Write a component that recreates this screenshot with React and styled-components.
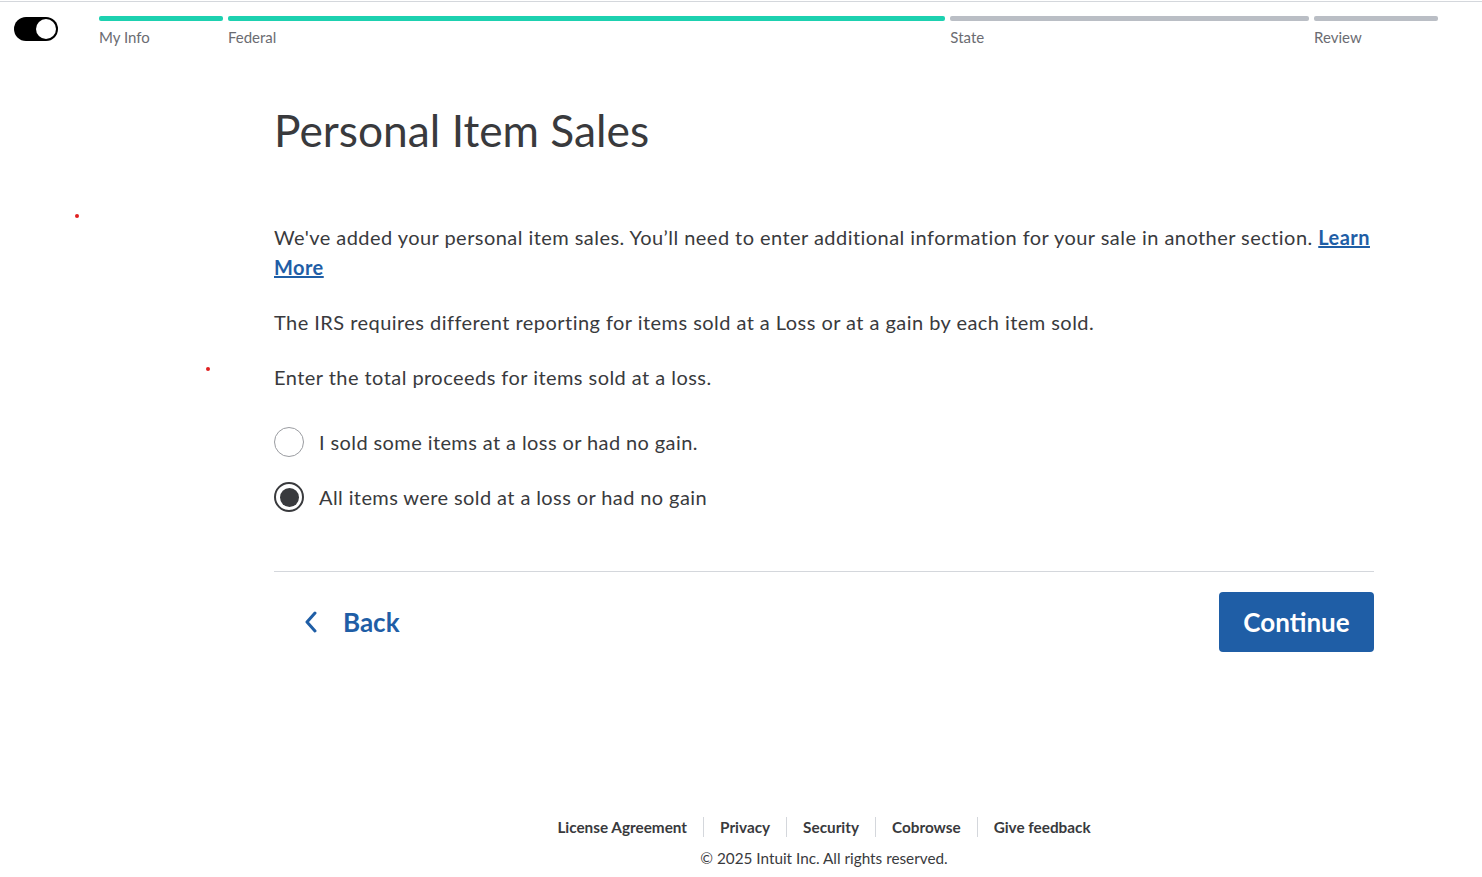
import React from 'react'
import styled, { createGlobalStyle } from 'styled-components'

const GlobalStyle = createGlobalStyle`
  html, body {
    margin: 0;
    padding: 0;
    background: #fff;
  }
  body {
    font-family: Lato, "Open Sans", sans-serif;
    color: #393a3d;
  }
`

const Page = styled.div`
  position: relative;
  min-height: 877px;
  display: flex;
  flex-direction: column;
  border-top: 1px solid #d4d7dc;
  margin-top: 1px;
  box-sizing: border-box;
`

const Header = styled.header`
  display: flex;
  align-items: flex-start;
  padding: 14px 44px 0 14px;
`

const Toggle = styled.div`
  width: 44px;
  height: 24px;
  border-radius: 12px;
  background: #000;
  flex: none;
  margin-top: 1px;
  display: flex;
  justify-content: flex-end;
  align-items: center;
  padding: 0 2px;
  box-sizing: border-box;
`

const Knob = styled.span`
  width: 20px;
  height: 20px;
  border-radius: 50%;
  background: #fff;
`

const Steps = styled.ol`
  display: flex;
  gap: 5px;
  list-style: none;
  margin: 0 0 0 41px;
  padding: 0;
  flex: 1;
`

const Step = styled.li`
  flex: ${props => props.$grow} 1 0;
  display: flex;
  flex-direction: column;
`

const Bar = styled.span`
  height: 5px;
  border-radius: 2px;
  background: ${props => (props.$done ? '#1dd1b0' : '#babec5')};
`

const StepLabel = styled.span`
  margin-top: 7px;
  font-size: 15px;
  color: #6b6c72;
`

const Main = styled.main`
  width: 1100px;
  margin-left: 274px;
  flex: 1;
  display: flex;
  flex-direction: column;
`

const Title = styled.h1`
  margin: 56px 0 0;
  font-size: 44.3px;
  font-weight: 400;
  line-height: 56px;
  color: #393a3d;
`

const Para = styled.p`
  margin: ${props => props.$top || 25}px 0 0;
  font-size: 20px;
  letter-spacing: 0.45px;
  line-height: 30px;
  color: #393a3d;
`

const Link = styled.a`
  color: #1f5ea6;
  font-weight: 700;
  text-decoration: underline;
`

const Options = styled.div`
  display: flex;
  flex-direction: column;
  gap: 25px;
  margin-top: 35px;
`

const Option = styled.label`
  display: flex;
  align-items: center;
  gap: 15px;
  font-size: 20px;
  letter-spacing: 0.4px;
  color: #393a3d;
  cursor: pointer;
`

const Radio = styled.span`
  width: 30px;
  height: 30px;
  border-radius: 50%;
  box-sizing: border-box;
  border: ${props => (props.$checked ? '2px solid #393a3d' : '1px solid #9a9ca1')};
  display: flex;
  align-items: center;
  justify-content: center;
  flex: none;
  &::after {
    content: '';
    width: 19px;
    height: 19px;
    border-radius: 50%;
    background: ${props => (props.$checked ? '#393a3d' : 'transparent')};
  }
`

const Divider = styled.hr`
  border: 0;
  border-top: 1px solid #d4d7dc;
  margin: 59px 0 0;
`

const Actions = styled.div`
  display: flex;
  justify-content: space-between;
  align-items: center;
  margin-top: 20px;
`

const BackButton = styled.button`
  display: flex;
  align-items: center;
  gap: 25px;
  background: none;
  border: 0;
  padding: 0 0 0 30px;
  font-family: inherit;
  font-size: 26px;
  font-weight: 700;
  color: #1f5ea6;
  cursor: pointer;
`

const ContinueButton = styled.button`
  width: 155px;
  height: 60px;
  border: 0;
  border-radius: 4px;
  background: #1f5ea6;
  color: #fff;
  font-family: inherit;
  font-size: 26px;
  font-weight: 700;
  cursor: pointer;
`

const Footer = styled.footer`
  display: flex;
  flex-direction: column;
  align-items: center;
  padding-bottom: 11px;
`

const FooterLinks = styled.nav`
  display: flex;
  align-items: center;
`

const FooterLink = styled.a`
  font-size: 15.3px;
  font-weight: 700;
  color: #393a3d;
  padding: 0 16px;
  line-height: 20px;
  & + & {
    border-left: 1px solid #d4d7dc;
  }
`

const Copyright = styled.p`
  margin: 12px 0 0;
  font-size: 15.3px;
  color: #393a3d;
`

const Dot = styled.span`
  position: absolute;
  width: 4px;
  height: 4px;
  border-radius: 50%;
  background: #e02020;
`

const steps = [
  { label: 'My Info', grow: 124, done: true },
  { label: 'Federal', grow: 718, done: true },
  { label: 'State', grow: 359, done: false },
  { label: 'Review', grow: 124, done: false }
]

const ChevronLeft = () => (
  <svg width="14" height="22" viewBox="0 0 14 22" fill="none">
    <path d="M11 2 L3 11 L11 20" stroke="#1f5ea6" strokeWidth="3" strokeLinecap="round" strokeLinejoin="round" />
  </svg>
)

export default function App() {
  return (
    <Page>
      <GlobalStyle />
      <Dot style={{ left: 75, top: 212 }} />
      <Dot style={{ left: 206, top: 365 }} />
      <Header>
        <Toggle>
          <Knob />
        </Toggle>
        <Steps>
          {steps.map(s => (
            <Step key={s.label} $grow={s.grow}>
              <Bar $done={s.done} />
              <StepLabel>{s.label}</StepLabel>
            </Step>
          ))}
        </Steps>
      </Header>
      <Main>
        <Title>Personal Item Sales</Title>
        <Para $top={64}>
          We've added your personal item sales. You’ll need to enter additional information for your sale in
          another section. <Link href="#">Learn </Link>
          <Link href="#">More</Link>
        </Para>
        <Para>The IRS requires different reporting for items sold at a Loss or at a gain by each item sold.</Para>
        <Para>Enter the total proceeds for items sold at a loss.</Para>
        <Options>
          <Option>
            <Radio />
            I sold some items at a loss or had no gain.
          </Option>
          <Option>
            <Radio $checked />
            All items were sold at a loss or had no gain
          </Option>
        </Options>
        <Divider />
        <Actions>
          <BackButton>
            <ChevronLeft />
            Back
          </BackButton>
          <ContinueButton>Continue</ContinueButton>
        </Actions>
        <div style={{ flex: 1 }} />
        <Footer>
          <FooterLinks>
            <FooterLink>License Agreement</FooterLink>
            <FooterLink>Privacy</FooterLink>
            <FooterLink>Security</FooterLink>
            <FooterLink>Cobrowse</FooterLink>
            <FooterLink>Give feedback</FooterLink>
          </FooterLinks>
          <Copyright>© 2025 Intuit Inc. All rights reserved.</Copyright>
        </Footer>
      </Main>
    </Page>
  )
}
